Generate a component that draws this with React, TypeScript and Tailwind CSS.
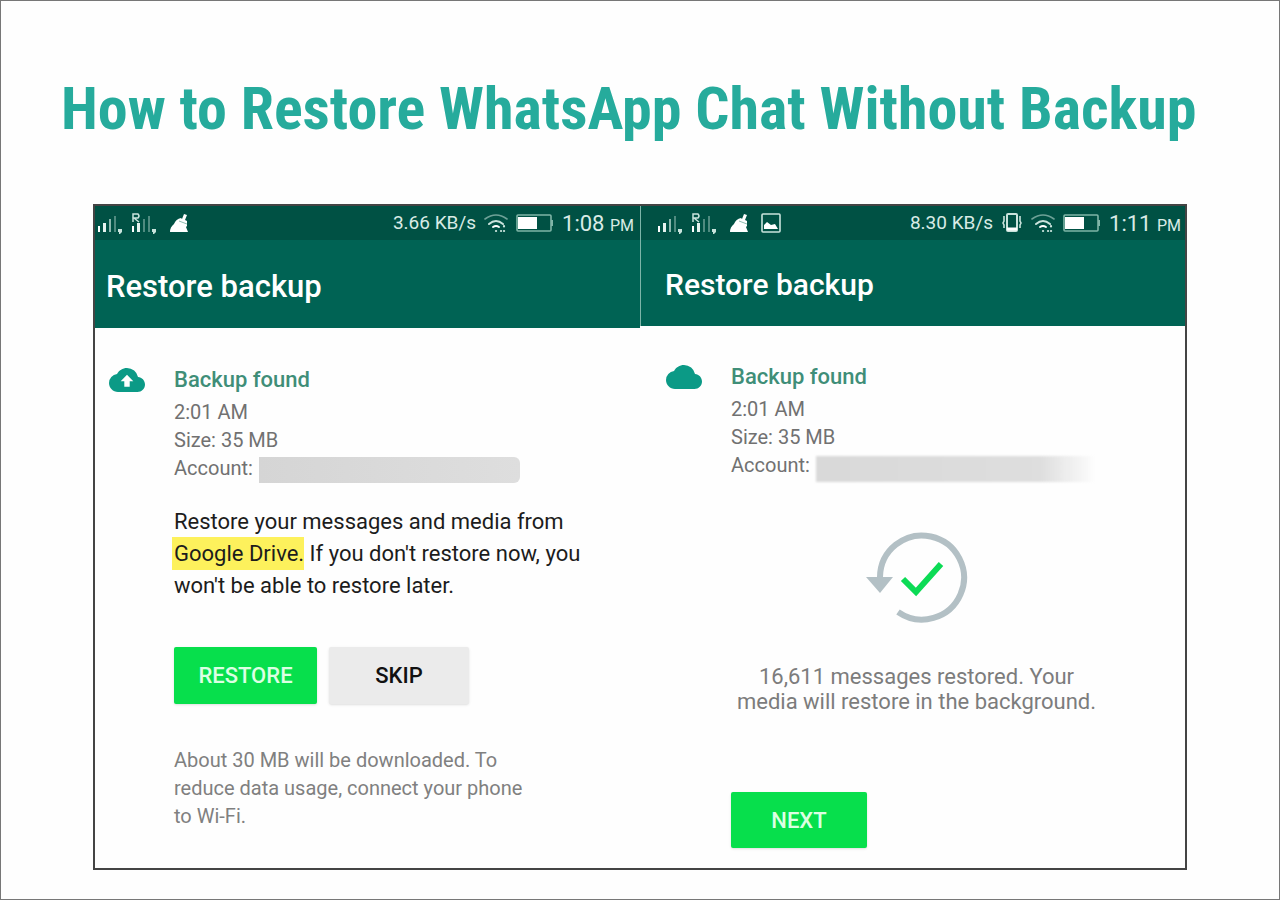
import type { ReactNode } from "react"

function Signal({ roaming = false }: { roaming?: boolean }) {
  return (
    <svg viewBox="0 0 26 24" className="h-6 w-[26px]" fill="#c9e3dc" aria-hidden="true">
      <rect x="1" y="15" width="2" height="6" fill="#fff" />
      <rect x="6" y="12" width="3" height="9" fill="#e6f3ef" />
      <rect x="12" y="8" width="2" height="13" opacity={roaming ? 0.4 : 0.7} />
      <rect x="17" y="5" width="2" height="16" opacity="0.4" />
      <path d="M21 18h4v3l-2 2h-1v-2h-1z" />
      {roaming && <path d="M2 11V3h5q2 2 0 4H3l5 4" fill="none" stroke="#c9e3dc" strokeWidth="1.5" />}
    </svg>
  )
}

function Broom() {
  return (
    <svg viewBox="0 0 20 22" className="h-[22px] w-5" fill="#fff" aria-hidden="true">
      <path d="M15 2l3 1-2 5 2 1v5l-1 1 2 5H1q0-5 4-8 2-5 7-6l1 1z" />
      <path d="M10 9l8 3" stroke="#8fbdb1" strokeWidth="1" />
    </svg>
  )
}

function Picture() {
  return (
    <svg viewBox="0 0 20 20" className="size-5" aria-hidden="true">
      <rect x="1" y="1" width="18" height="18" rx="1" fill="none" stroke="#c9e3dc" strokeWidth="1.6" />
      <path d="M3 16v-4l3-3 4 3 4-1 3 5z" fill="#fff" />
    </svg>
  )
}

function Vibrate() {
  return (
    <svg viewBox="0 0 22 20" className="h-5 w-[22px]" fill="none" stroke="#c9e3dc" aria-hidden="true">
      <rect x="6" y="1" width="10" height="17" rx="1" strokeWidth="2" />
      <path d="M6 16h10" stroke="#fff" strokeWidth="3" />
      <path d="M3 3v5l-1 2 1 2v3M19 3v5l1 2-1 2v3" strokeWidth="1.6" />
    </svg>
  )
}

function Wifi() {
  return (
    <svg viewBox="0 0 24 20" className="h-5 w-6" fill="none" stroke="#c9e3dc" strokeLinecap="round" aria-hidden="true">
      <path d="M1 6Q12-2 23 6" strokeWidth="1.6" opacity="0.55" />
      <path d="M5 11q7-6 14 0" strokeWidth="2" />
      <path d="M9 14q3-2 6 0" strokeWidth="2" stroke="#fff" />
      <path d="M12 18h.1M20 13v.5M20 18h.1M17 18h.1" strokeWidth="2.2" />
    </svg>
  )
}

function Battery() {
  return (
    <svg viewBox="0 0 38 18" className="h-[18px] w-[38px]" aria-hidden="true">
      <rect x="1" y="1" width="34" height="16" rx="1" fill="none" stroke="#7fb5a7" strokeWidth="1.6" />
      <rect x="2" y="3" width="19" height="12" fill="#fff" />
      <rect x="35" y="6" width="2" height="6" fill="#7fb5a7" />
    </svg>
  )
}

function Cloud({ upload = false }: { upload?: boolean }) {
  return (
    <svg viewBox="0 4 24 16" className="h-6 w-9 shrink-0" fill="#0b9a86" aria-hidden="true">
      <path d="M19.35 10.04A7.49 7.49 0 0 0 12 4C9.11 4 6.6 5.64 5.35 8.04A5.994 5.994 0 0 0 0 14c0 3.31 2.69 6 6 6h13c2.76 0 5-2.24 5-5 0-2.64-2.05-4.78-4.65-4.96z" />
      {upload && <path d="M12 8.5l-4.2 4.4h2.4v3.6h3.6v-3.6h2.4z" fill="#fff" />}
    </svg>
  )
}

function RestoredIcon() {
  return (
    <svg viewBox="0 0 104 96" className="h-24 w-[104px]" fill="none" aria-hidden="true">
      <path d="M15 47A42 42 0 1 1 33 82" stroke="#b3c0c5" strokeWidth="6" />
      <path d="M1 47h27L15 63z" fill="#b3c0c5" />
      <path d="M38 49l13 13 25-28" stroke="#0cdb55" strokeWidth="6" />
    </svg>
  )
}

type StatusBarProps = {
  speed: string
  time: string
  left?: ReactNode
  right?: ReactNode
  className: string
}

function StatusBar({ speed, time, left, right, className }: StatusBarProps) {
  return (
    <div className={`flex h-[34px] items-center justify-between bg-[#005144] text-[#d9ebe6] ${className}`}>
      <div className="flex items-center gap-2">
        <Signal />
        <Signal roaming />
        <span className="ml-1 flex items-center gap-3">
          <Broom />
          {left}
        </span>
      </div>
      <div className="flex items-center gap-2">
        <span className="text-[19px]">{speed}</span>
        {right}
        <Wifi />
        <Battery />
        <span className="text-[22px]">
          {time} <span className="text-base">PM</span>
        </span>
      </div>
    </div>
  )
}

function BackupInfo({ children, upload }: { children: ReactNode; upload?: boolean }) {
  return (
    <div className="-ml-[65px] flex items-start">
      <div className="flex h-8 w-[65px] shrink-0 items-center">
        <Cloud upload={upload} />
      </div>
      <div className="grow">
        <h3 className="text-[22px] leading-8 font-medium text-[#3f8e78]">Backup found</h3>
        <div className="mt-[2px] text-xl leading-7 text-[#717171]">
          <p>2:01 AM</p>
          <p>Size: 35 MB</p>
          {children}
        </div>
      </div>
    </div>
  )
}

export default function App() {
  return (
    <main className="min-h-screen border border-[#777] bg-[#fefefe] px-[92px] pt-[68px] pb-7 font-[Roboto,sans-serif]">
      <h1 className="-mx-8 h-20 font-['Roboto_Condensed','Liberation_Sans',sans-serif] text-[60px] leading-[80px] font-bold whitespace-nowrap text-[#26ab9c]">
        How to Restore WhatsApp Chat Without Backup
      </h1>

      <div className="mt-[55px] grid grid-cols-2 border-2 border-[#444] bg-[#fefefe]">
        <section className="pb-9">
          <StatusBar speed="3.66 KB/s" time="1:08" className="pr-[6px] pl-[2px]" />
          <h2 className="flex h-[88px] items-center bg-[#006354] pt-[6px] pl-[11px] text-[31px] font-medium text-white">
            Restore backup
          </h2>
          <div className="pt-9 pl-[79px]">
            <BackupInfo upload>
              <p className="flex h-7 items-center">
                Account:
                <span className="mt-1 ml-[6px] h-[26px] w-[261px] rounded-r-md bg-linear-to-r from-[#d5d5d5] to-[#dedede]" />
              </p>
            </BackupInfo>
            <p className="mt-6 text-[22px] leading-8 text-[#1c1c1c]">
              Restore your messages and media from
              <br />
              <mark className="-ml-[2px] bg-[#fdf15c] py-1 pl-[2px] text-[#1c1c1c]">Google Drive.</mark> If you don't restore now, you
              <br />
              won't be able to restore later.
            </p>
            <div className="mt-[45px] flex gap-3">
              <button className="h-[57px] w-[143px] rounded-xs bg-[#07df4c] text-[22px] font-medium text-[#dcffe3] shadow-sm">
                RESTORE
              </button>
              <button className="h-[57px] w-[140px] rounded-xs bg-[#ebebeb] text-[22px] font-medium text-[#111] shadow">
                SKIP
              </button>
            </div>
            <p className="mt-[42px] text-xl leading-7 text-[#808080]">
              About 30 MB will be downloaded. To
              <br />
              reduce data usage, connect your phone
              <br />
              to Wi-Fi.
            </p>
          </div>
        </section>

        <section className="pb-5">
          <div className="border-l border-[#7db5a8]">
            <StatusBar speed="8.30 KB/s" time="1:11" className="pr-1 pl-4" left={<Picture />} right={<Vibrate />} />
            <h2 className="flex h-[86px] items-center bg-[#006354] pt-[2px] pl-6 text-[30px] font-medium text-white">
              Restore backup
            </h2>
          </div>
          <div className="pt-[35px] pl-[91px]">
            <BackupInfo>
              <p className="flex h-7 items-center">
                Account:
                <span className="mt-2 ml-[6px] h-[26px] w-[280px] bg-linear-to-r from-[#d9d9d9] via-[#dedede] via-80% to-transparent blur-[1px]" />
              </p>
            </BackupInfo>
            <div className="mr-[83px] flex flex-col items-center">
              <div className="mt-[51px]">
                <RestoredIcon />
              </div>
              <p className="mt-[38px] text-center text-[22px] leading-[25px] whitespace-nowrap text-[#7c7c7c]">
                16,611 messages restored. Your
                <br />
                media will restore in the background.
              </p>
            </div>
            <button className="mt-[78px] h-14 w-[136px] rounded-xs bg-[#07df4c] text-[22px] font-medium text-[#dcffe3] shadow-sm">
              NEXT
            </button>
          </div>
        </section>
      </div>
    </main>
  )
}
